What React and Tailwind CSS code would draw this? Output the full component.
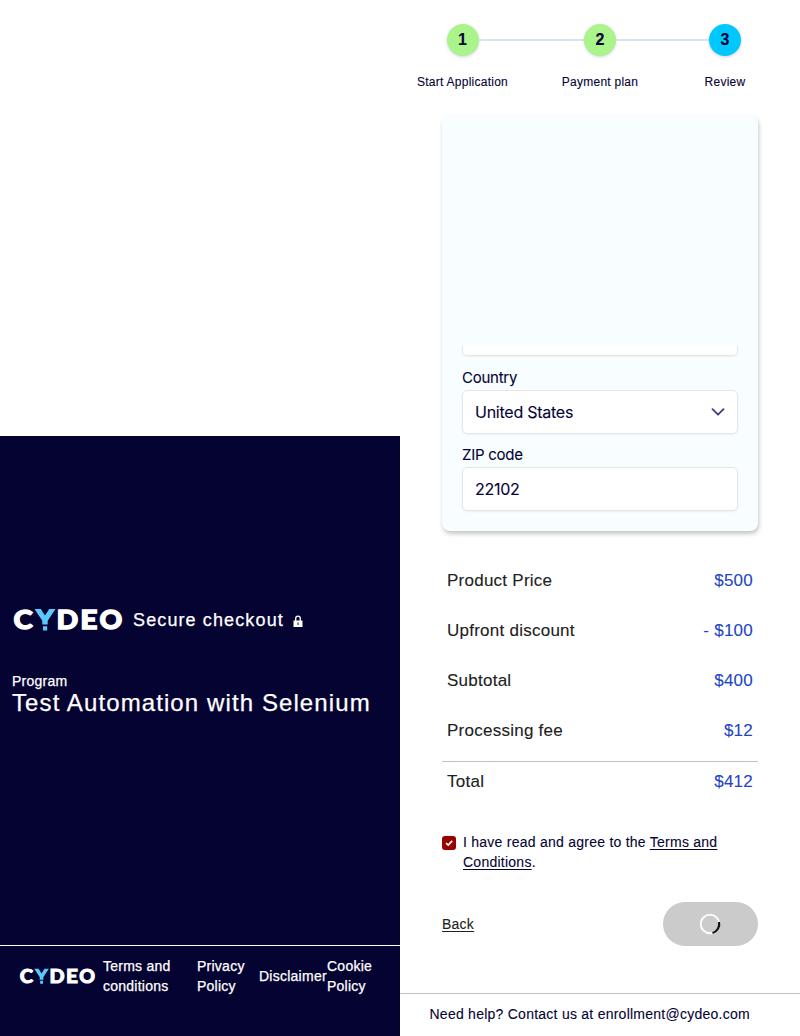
import React from "react";

const steps = [
  { n: "1", label: "Start Application", color: "bg-[#abf48b]", width: "w-[125px]" },
  { n: "2", label: "Payment plan", color: "bg-[#abf48b]", width: "w-[150px]" },
  { n: "3", label: "Review", color: "bg-[#00c8ff]", width: "w-[100px]" },
];

const prices = [
  ["Product Price", "$500"],
  ["Upfront discount", "- $100"],
  ["Subtotal", "$400"],
  ["Processing fee", "$12"],
];

function Logo({ className }) {
  return (
    <svg viewBox="0 -6 110 36" className={className} fill="#fff" stroke="#fff" strokeWidth="1.3" fontFamily="Lato, sans-serif" fontWeight="900" fontSize="26.5">
      <text x="0.6" y="21.400" textLength="19.500" lengthAdjust="spacingAndGlyphs">C</text>
      <path d="M21.500 1h6.300l4.200 6.500L36.200 1H42.500l-7.800 11.800v3.700h-5.400v-3.700zM30 18.200h4.200v4.200H30z" fill="#5ac8fa" stroke="none" />
      <text x="43.600" y="21.400" textLength="22" lengthAdjust="spacingAndGlyphs">D</text>
      <text x="67.200" y="21.400" textLength="17.500" lengthAdjust="spacingAndGlyphs">E</text>
      <text x="86.500" y="21.400" textLength="23" lengthAdjust="spacingAndGlyphs">O</text>
    </svg>
  );
}

function Field({ label, value, select, className }) {
  return (
    <div className={className}>
      <div className="h-[25px] text-[15px] leading-[25px] tracking-[-0.25px]">{label}</div>
      <div className="flex h-11 items-center justify-between rounded-[5px] border border-[#e6e6e6] bg-white pl-3 pr-3 text-[16px] tracking-[-0.25px] shadow-[0_1px_2px_rgba(0,0,0,0.05)]">
        <span>{value}</span>
        {select && (
          <svg viewBox="0 0 14 8" className="h-2 w-3.5" fill="none" stroke="#3f3d7d" strokeWidth="1.8" strokeLinecap="round" strokeLinejoin="round">
            <path d="M1.5 1.2 7 6.7l5.500-5.500" />
          </svg>
        )}
      </div>
    </div>
  );
}

export default function App() {
  return (
    <div className="flex h-[1036px] w-[800px] bg-white font-['Liberation_Sans',Arial,sans-serif] text-sm tracking-[0.25px] text-[#040333]">
      <aside className="flex w-[400px] flex-col pt-[436px] text-white">
        <div className="flex flex-1 flex-col bg-[#050332] [-webkit-text-stroke:0.25px_white]">
          <div className="flex h-[509px] flex-col pt-[170px]">
            <div className="flex items-center pl-[13px]">
              <Logo className="-my-1.5 h-9 w-[110px]" />
              <span className="ml-[10px] text-lg leading-7 tracking-[1.12px]">Secure checkout</span>
              <svg viewBox="0 0 10 12" className="ml-[9px] mt-[2px] h-3 w-2.5">
                <path d="M2.700 6V3.500a2.300 2.300 0 0 1 4.600 0V6" fill="none" stroke="#fff" strokeWidth="1.300" />
                <path d="M.5 5.500h9V12h-9z" fill="#fff" />
                <path d="M4.500 7.500h1v2.500h-1z" fill="#040333" />
              </svg>
            </div>
            <div className="mt-[37px] pl-3 leading-5">Program</div>
            <h1 className="pl-3 text-2xl leading-6 tracking-[1.1px]">Test Automation with Selenium</h1>
          </div>
          <footer className="flex h-[91px] border-t border-white">
            <div className="flex h-[60px] items-center pl-[19px] leading-5">
              <Logo className="h-[25px] w-[77px]" />
              <div className="ml-[7px] w-[94px]">Terms and<br />conditions</div>
              <div className="w-[62px]">Privacy<br />Policy</div>
              <div className="w-[68px]">Disclaimer</div>
              <div>Cookie<br />Policy</div>
            </div>
          </footer>
        </div>
      </aside>

      <main className="flex w-[400px] flex-col [-webkit-text-stroke:0.1px]">
        <div className="flex h-[115px] pt-6">
          <div className="flex">
            {steps.map((s, i) => (
              <div key={s.n} className={`flex flex-col items-center ${s.width}`}>
                <div className="flex w-full items-center">
                  <div className={`h-[2px] flex-1 ${i > 0 ? "bg-[#dae2ee]" : ""}`} />
                  <div className={`flex size-8 items-center justify-center rounded-full text-base font-bold shadow-[0_1px_3px_rgba(60,80,150,0.25)] ${s.color}`}>{s.n}</div>
                  <div className={`h-[2px] flex-1 ${i < 2 ? "bg-[#dae2ee]" : ""}`} />
                </div>
                <div className="mt-[17px] text-xs leading-[18px] whitespace-nowrap">{s.label}</div>
              </div>
            ))}
          </div>
        </div>

        <section className="mx-[42px] h-[416px] rounded-lg bg-[#f8fdff] px-5 pt-[231px] font-[Inter,sans-serif] tracking-normal shadow-[1px_3px_4px_rgba(0,0,0,0.22)]">
          <div className="h-[10px] rounded-b-[5px] border border-t-0 border-[#e6e6e6] bg-white shadow-[0_1px_2px_rgba(0,0,0,0.05)]" />
          <Field className="mt-[9px]" label="Country" value="United States" select />
          <Field className="mt-2" label="ZIP code" value="22102" />
        </section>

        <section className="mx-[42px] mt-[25px] text-[17px] tracking-[0.25px] text-[#212121]">
          {prices.map(([label, value]) => (
            <div key={label} className="flex h-[50px] items-center justify-between px-[5px]">
              <span>{label}</span>
              <span className="text-[#1e46c3]">{value}</span>
            </div>
          ))}
          <div className="mt-[5px] flex h-[41px] items-center justify-between border-t border-[#c0c0cb] px-[5px]">
            <span>Total</span>
            <span className="text-[#1e46c3]">$412</span>
          </div>
        </section>

        <div className="mx-[42px] mt-[30px] flex leading-5">
          <div className="mt-1 mr-[7px] flex size-[14px] shrink-0 items-center justify-center rounded-[3px] bg-[#990000]">
            <svg viewBox="0 0 8 8" className="size-2" fill="none" stroke="#fff" strokeWidth="1.700">
              <path d="M1 4.100 3.200 6 7.200 1.800" />
            </svg>
          </div>
          <p>
            I have read and agree to the <span className="underline underline-offset-2">Terms and</span><br />
            <span className="underline underline-offset-2">Conditions</span>.
          </p>
        </div>

        <div className="mx-[42px] mt-[30px] flex h-11 items-center justify-between">
          <a className="text-[#212121] underline underline-offset-2">Back</a>
          <button className="flex h-11 w-[95px] items-center justify-center rounded-full bg-[#cbcbcb] pr-px">
            <svg viewBox="0 0 22 22" className="size-[22px]" fill="none" strokeWidth="2">
              <circle cx="11" cy="11" r="9.300" stroke="#fafafa" />
              <path d="M20 9A9.300 9.300 0 0 1 13.500 20" stroke="#111" strokeWidth="2.200" />
            </svg>
          </button>
        </div>

        <footer className="mt-auto flex h-[43px] border-t border-[#c0c0cb] pl-[29.500px] pt-[10px] leading-5">Need help? Contact us at enrollment@cydeo.com</footer>
      </main>
    </div>
  );
}
